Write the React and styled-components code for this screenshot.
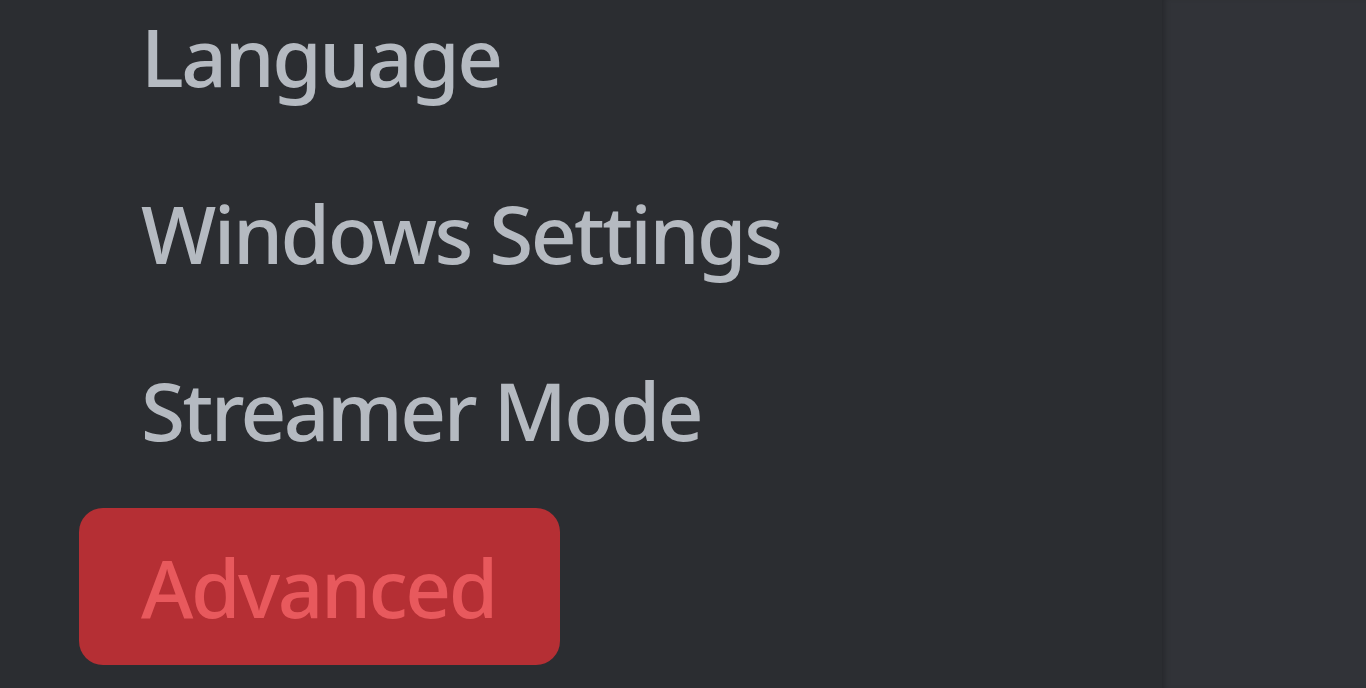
import React from "react";
import styled, { createGlobalStyle } from "styled-components";

const Global = createGlobalStyle`
  html, body { margin: 0; padding: 0; background: #313338; overflow: hidden; }
  #root { height: 688px; }
`;

const Layout = styled.div`
  display: flex;
  width: 1366px;
  height: 688px;
  overflow: hidden;
`;

const Sidebar = styled.nav`
  width: 1162px;
  flex: none;
  background: #2b2d31;
  padding-left: 79px;
  box-sizing: border-box;
  overflow: hidden;
`;

const List = styled.div`
  display: flex;
  flex-direction: column;
  gap: 20px;
  margin-top: -23px;
`;

const Item = styled.div`
  display: flex;
  align-items: center;
  width: 481px;
  height: 157px;
  box-sizing: border-box;
  padding-left: 62px;
  padding-top: 1px;
  border-radius: 24px;
  white-space: nowrap;
  font-family: "Noto Sans", "Open Sans", sans-serif;
  font-weight: 500;
  font-size: 80px;
  line-height: 1;
  letter-spacing: -2.5px;
  color: ${(p) => (p.$danger ? "#e8595d" : "#b5bac1")};
  background: ${(p) => (p.$danger ? "#b52f34" : "transparent")};
`;

const Main = styled.main`
  flex: 1;
  background: #313338;
  box-shadow: inset 6px 0 6px -4px rgba(0, 0, 0, 0.25);
`;

export default function App() {
  return (
    <>
      <Global />
      <Layout>
        <Sidebar>
          <List>
            <Item>Language</Item>
            <Item>Windows Settings</Item>
            <Item>Streamer Mode</Item>
            <Item $danger>Advanced</Item>
          </List>
        </Sidebar>
        <Main />
      </Layout>
    </>
  );
}
